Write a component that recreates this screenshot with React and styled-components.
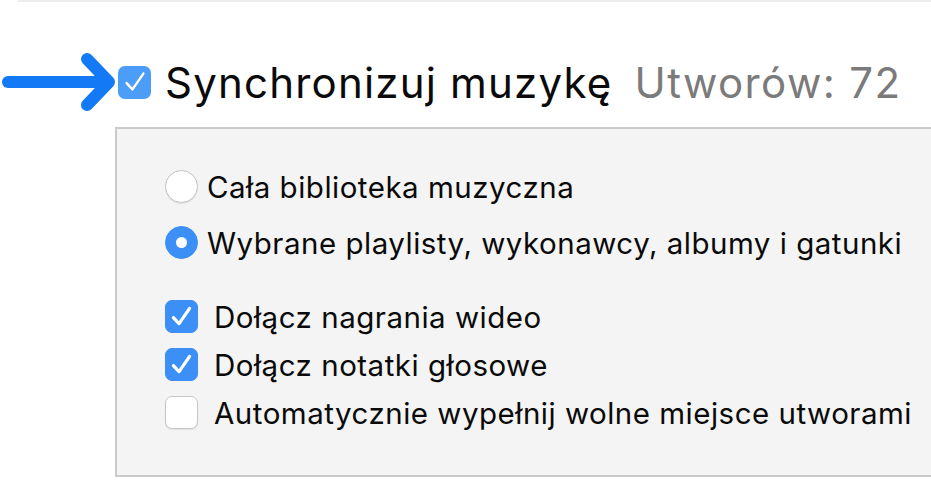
import React from "react";
import styled, { createGlobalStyle } from "styled-components";

const Global = createGlobalStyle`
  html, body { margin: 0; padding: 0; background: #ffffff; }
  body { font-family: Inter, "Noto Sans", "Liberation Sans", sans-serif; color: #000; overflow: hidden; }
`;

const Page = styled.div`
  width: 931px;
  height: 497px;
  display: flex;
  flex-direction: column;
`;

const TopRule = styled.div`
  margin-left: 18px;
  height: 2px;
  background: #ededed;
`;

const Header = styled.div`
  display: flex;
  align-items: center;
  margin-top: 50px;
  height: 60px;
`;

const ArrowSvg = styled.svg`
  flex: none;
`;

const BigCheck = styled.div`
  flex: none;
  width: 33px;
  height: 33px;
  border-radius: 7px;
  background: #4b9df7;
  display: flex;
  align-items: center;
  justify-content: center;
  margin-left: 2px;
`;

const Title = styled.span`
  font-size: 42px;
  font-weight: 400;
  letter-spacing: 1.2px;
  color: #0a0a0a;
  margin-left: 14px;
  white-space: nowrap;
`;

const Count = styled.span`
  font-size: 42px;
  letter-spacing: 1.4px;
  color: #7b7b7b;
  margin-left: 22px;
  white-space: nowrap;
`;

const Panel = styled.div`
  box-sizing: border-box;
  margin-top: 15px;
  margin-left: 115px;
  margin-right: -10px;
  height: 350px;
  background: #f4f4f4;
  border: 2px solid #cacaca;
  border-right: none;
  padding: 41px 0 0 48px;
  display: flex;
  flex-direction: column;
`;

const Group = styled.div`
  display: flex;
  flex-direction: column;
  gap: ${(p) => p.$gap}px;
  margin-bottom: ${(p) => p.$after || 0}px;
`;

const Row = styled.label`
  display: flex;
  align-items: center;
  height: 33px;
`;

const Radio = styled.span`
  flex: none;
  width: 33px;
  height: 33px;
  box-sizing: border-box;
  border-radius: 50%;
  background: ${(p) => (p.$on ? "#3b8ff6" : "#ffffff")};
  border: 1px solid ${(p) => (p.$on ? "#3b8ff6" : "#c3c3c3")};
  box-shadow: ${(p) => (p.$on ? "none" : "0 1px 1px rgba(0,0,0,0.08)")};
  display: flex;
  align-items: center;
  justify-content: center;
  &::after {
    content: "";
    display: ${(p) => (p.$on ? "block" : "none")};
    width: 11px;
    height: 11px;
    border-radius: 50%;
    background: #fff;
  }
`;

const Box = styled.span`
  flex: none;
  width: 33px;
  height: 33px;
  box-sizing: border-box;
  border-radius: 7px;
  background: ${(p) => (p.$on ? "#3b8ff6" : "#ffffff")};
  border: 1px solid ${(p) => (p.$on ? "#3b8ff6" : "#c6c6c6")};
  box-shadow: ${(p) => (p.$on ? "none" : "0 1px 1px rgba(0,0,0,0.08)")};
  display: flex;
  align-items: center;
  justify-content: center;
`;

const Label = styled.span`
  font-size: 29.5px;
  letter-spacing: 0.5px;
  color: #0a0a0a;
  margin-left: ${(p) => p.$gap}px;
  white-space: nowrap;
`;

const Tick = ({ size = 27, width = 2.4 }) => (
  <svg width={size} height={size} viewBox="0 0 20 20" fill="none">
    <path d="M4 10.8 L8.2 15.3 L16 4" stroke="#fff" strokeWidth={width} strokeLinecap="round" strokeLinejoin="round" />
  </svg>
);

const Arrow = () => (
  <ArrowSvg width="116" height="60" viewBox="0 0 116 60">
    <g stroke="#1479f4" strokeWidth="12" strokeLinecap="round" strokeLinejoin="round" fill="none">
      <path d="M8 30 L106 30" />
      <path d="M87 7 L109 30 L87 53" />
    </g>
  </ArrowSvg>
);

const CheckRow = ({ on, children }) => (
  <Row>
    <Box $on={on}>{on && <Tick />}</Box>
    <Label $gap={16}>{children}</Label>
  </Row>
);

const RadioRow = ({ on, children }) => (
  <Row>
    <Radio $on={on} />
    <Label $gap={9}>{children}</Label>
  </Row>
);

export default function App() {
  return (
    <Page>
      <Global />
      <TopRule />
      <Header>
        <Arrow />
        <BigCheck>
          <Tick size={28} width={1.7} />
        </BigCheck>
        <Title>Synchronizuj muzykę</Title>
        <Count>Utworów: 72</Count>
      </Header>
      <Panel>
        <Group $gap={23} $after={41}>
          <RadioRow>Cała biblioteka muzyczna</RadioRow>
          <RadioRow on>Wybrane playlisty, wykonawcy, albumy i gatunki</RadioRow>
        </Group>
        <Group $gap={15}>
          <CheckRow on>Dołącz nagrania wideo</CheckRow>
          <CheckRow on>Dołącz notatki głosowe</CheckRow>
          <CheckRow>Automatycznie wypełnij wolne miejsce utworami</CheckRow>
        </Group>
      </Panel>
    </Page>
  );
}
